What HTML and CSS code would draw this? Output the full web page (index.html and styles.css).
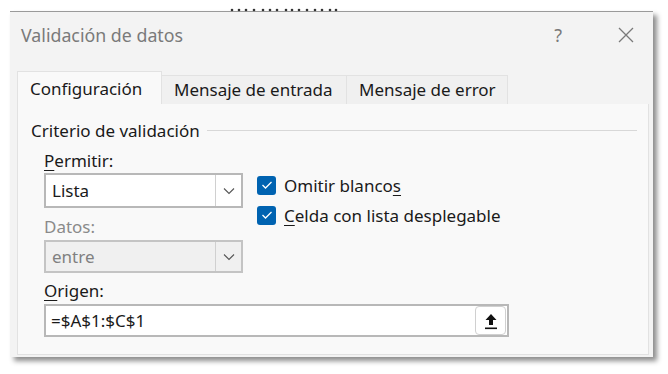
FILE: index.html
```html
<!DOCTYPE html>
<html lang="es">
<head>
<meta charset="utf-8">
<link rel="stylesheet" href="styles.css">
</head>
<body>
<div class="stage">
  <svg class="behind" width="110" height="4" viewBox="0 0 110 4">
    <g fill="#333"><circle cx="2" cy="2" r="1.3"/><circle cx="9" cy="2" r="1.3"/><circle cx="16" cy="2" r="1.3"/><circle cx="24" cy="2" r="1.3"/><circle cx="33" cy="2" r="1.3"/><circle cx="40" cy="2" r="1.3"/><circle cx="47" cy="2" r="1.3"/><circle cx="56" cy="2" r="1.3"/><circle cx="62" cy="2" r="1.3"/><circle cx="69" cy="2" r="1.3"/><circle cx="77" cy="2" r="1.3"/><circle cx="85" cy="2" r="1.3"/><circle cx="92" cy="2" r="1.3"/><circle cx="100" cy="2" r="1.3"/><circle cx="106" cy="2" r="1.3"/></g>
  </svg>
  <div class="dialog">
    <div class="titlebar">
      <span class="title">Validación de datos</span>
      <span class="help">?</span>
      <svg class="close" width="16" height="16" viewBox="0 0 16 16"><path d="M1 1L15 15M15 1L1 15" stroke="#7a7a7a" stroke-width="1.3" fill="none"/></svg>
    </div>
    <div class="tabs">
      <div class="tab active">Configuración</div>
      <div class="tab">Mensaje de entrada</div>
      <div class="tab">Mensaje de error</div>
    </div>
    <div class="panel">
      <div class="legend"><span>Criterio de validación</span><span class="rule"></span></div>
      <div class="row">
        <div class="col">
          <div class="label first"><u>P</u>ermitir:</div>
          <div class="select">
            <span class="value">Lista</span>
            <span class="arrow"><svg width="12" height="8" viewBox="0 0 12 8"><path d="M1 1.5L6 6.5L11 1.5" stroke="#555" stroke-width="1.1" fill="none"/></svg></span>
          </div>
          <div class="label disabled">Datos:</div>
          <div class="select off">
            <span class="value">entre</span>
            <span class="arrow"><svg width="12" height="8" viewBox="0 0 12 8"><path d="M1 1.5L6 6.5L11 1.5" stroke="#555" stroke-width="1.1" fill="none"/></svg></span>
          </div>
        </div>
        <div class="checks">
          <div class="check"><span class="box"><svg width="12" height="10" viewBox="0 0 12 10"><path d="M1.5 5L4.5 8L10.5 2" stroke="#fff" stroke-width="1.3" fill="none"/></svg></span><span class="ctext">Omitir blanco<u>s</u></span></div>
          <div class="check"><span class="box"><svg width="12" height="10" viewBox="0 0 12 10"><path d="M1.5 5L4.5 8L10.5 2" stroke="#fff" stroke-width="1.3" fill="none"/></svg></span><span class="ctext"><u>C</u>elda con lista desplegable</span></div>
        </div>
      </div>
      <div class="label origen"><u>O</u>rigen:</div>
      <div class="input">
        <span class="value">=$A$1:$C$1</span>
        <span class="upbtn"><svg width="16" height="18" viewBox="0 0 16 18"><path d="M8 2L2.5 8H6V13H10V8H13.5Z" fill="#111"/><rect x="2" y="15.5" width="12" height="1.6" fill="#111"/></svg></span>
      </div>
    </div>
  </div>
</div>
</body>
</html>
```
FILE: styles.css
```css
* { box-sizing: border-box; }
html, body { margin: 0; padding: 0; background: #fff; }
body { font-family: "Noto Sans", "Open Sans", sans-serif; color: #1a1a1a; }
.stage { width: 668px; height: 374px; padding: 11px 0 0 10px; position: relative; }
.behind { position: absolute; top: 8px; left: 230px; }
.dialog {
  width: 643px; height: 346px;
  background: #f3f3f3;
  border-top: 1px solid #9a9a9a;
  box-shadow: 4px 4px 5px rgba(0,0,0,0.45);
  display: flex; flex-direction: column;
  padding: 0 4px 2px 7px;
}
.titlebar { height: 59px; display: flex; align-items: center; padding: 0 0 13px 4px; }
.title { font-size: 17.8px; color: #7a7a7a; flex: 1; }
.help { font-size: 18px; color: #7a7a7a; margin-right: 56px; }
.close { margin-right: 15px; }
.tabs { display: flex; align-items: flex-end; height: 33px; }
.tab {
  font-size: 17px; height: 29px; line-height: 27px; padding: 0 12px;
  border: 1px solid #e2e2e2; border-bottom: none; background: #f0f0f0; color: #1a1a1a;
  white-space: nowrap;
}
.tab.active { height: 33px; line-height: 33px; background: #f9f9f9; width: 145px; }
.tab:nth-child(2) { width: 185px; border-left: none; }
.tab:nth-child(3) { width: 161px; border-left: none; }
.panel {
  flex: 1; background: #f9f9f9; border: 1px solid #e2e2e2; border-top: none;
  padding: 15px 11px 0 13px;
}
.legend { display: flex; align-items: center; font-size: 17px; gap: 7px; height: 22px; }
.rule { flex: 1; height: 1px; background: #d8d8d8; }
.row { display: flex; }
.col { width: 226px; padding-left: 13px; }
.label { font-size: 17px; height: 20px; line-height: 20px; margin-top: 9px; margin-bottom: 3px; white-space: nowrap; }
.label.first { margin-top: 10px; margin-bottom: 2px; }
.label.disabled { color: #8a8a8a; }
.label.origen { margin-top: 8px; margin-left: 13px; }
.label u, .ctext u { text-underline-offset: 3px; }
.select {
  width: 199px; height: 35px; border: 2px solid #b8b8b8; background: #fff; display: flex;
}
.select .value { flex: 1; font-size: 17px; line-height: 31px; padding-left: 6px; }
.select .arrow { width: 26px; border-left: 1px solid #d0d0d0; display: flex; align-items: center; justify-content: center; }
.select.off { background: #f0f0f0; height: 33px; border-color: #c4c4c4; }
.select.off .value { color: #808080; line-height: 29px; }
.checks { padding-top: 34px; display: flex; flex-direction: column; gap: 10px; }
.check { display: flex; align-items: center; font-size: 17px; height: 20px; gap: 8px; white-space: nowrap; }
.box { width: 19px; height: 19px; background: #0063b1; border-radius: 3px; display: flex; align-items: center; justify-content: center; }
.input {
  margin-left: 13px; width: 465px; height: 33px; border: 2px solid #b8b8b8; background: #fff; display: flex; align-items: center;
}
.input .value { flex: 1; font-size: 17px; padding-left: 5px; }
.upbtn { width: 31px; height: 29px; border: 1px solid #d0d0d0; border-radius: 4px; display: flex; align-items: center; justify-content: center; margin-right: 1px; background: #fff; }
```
